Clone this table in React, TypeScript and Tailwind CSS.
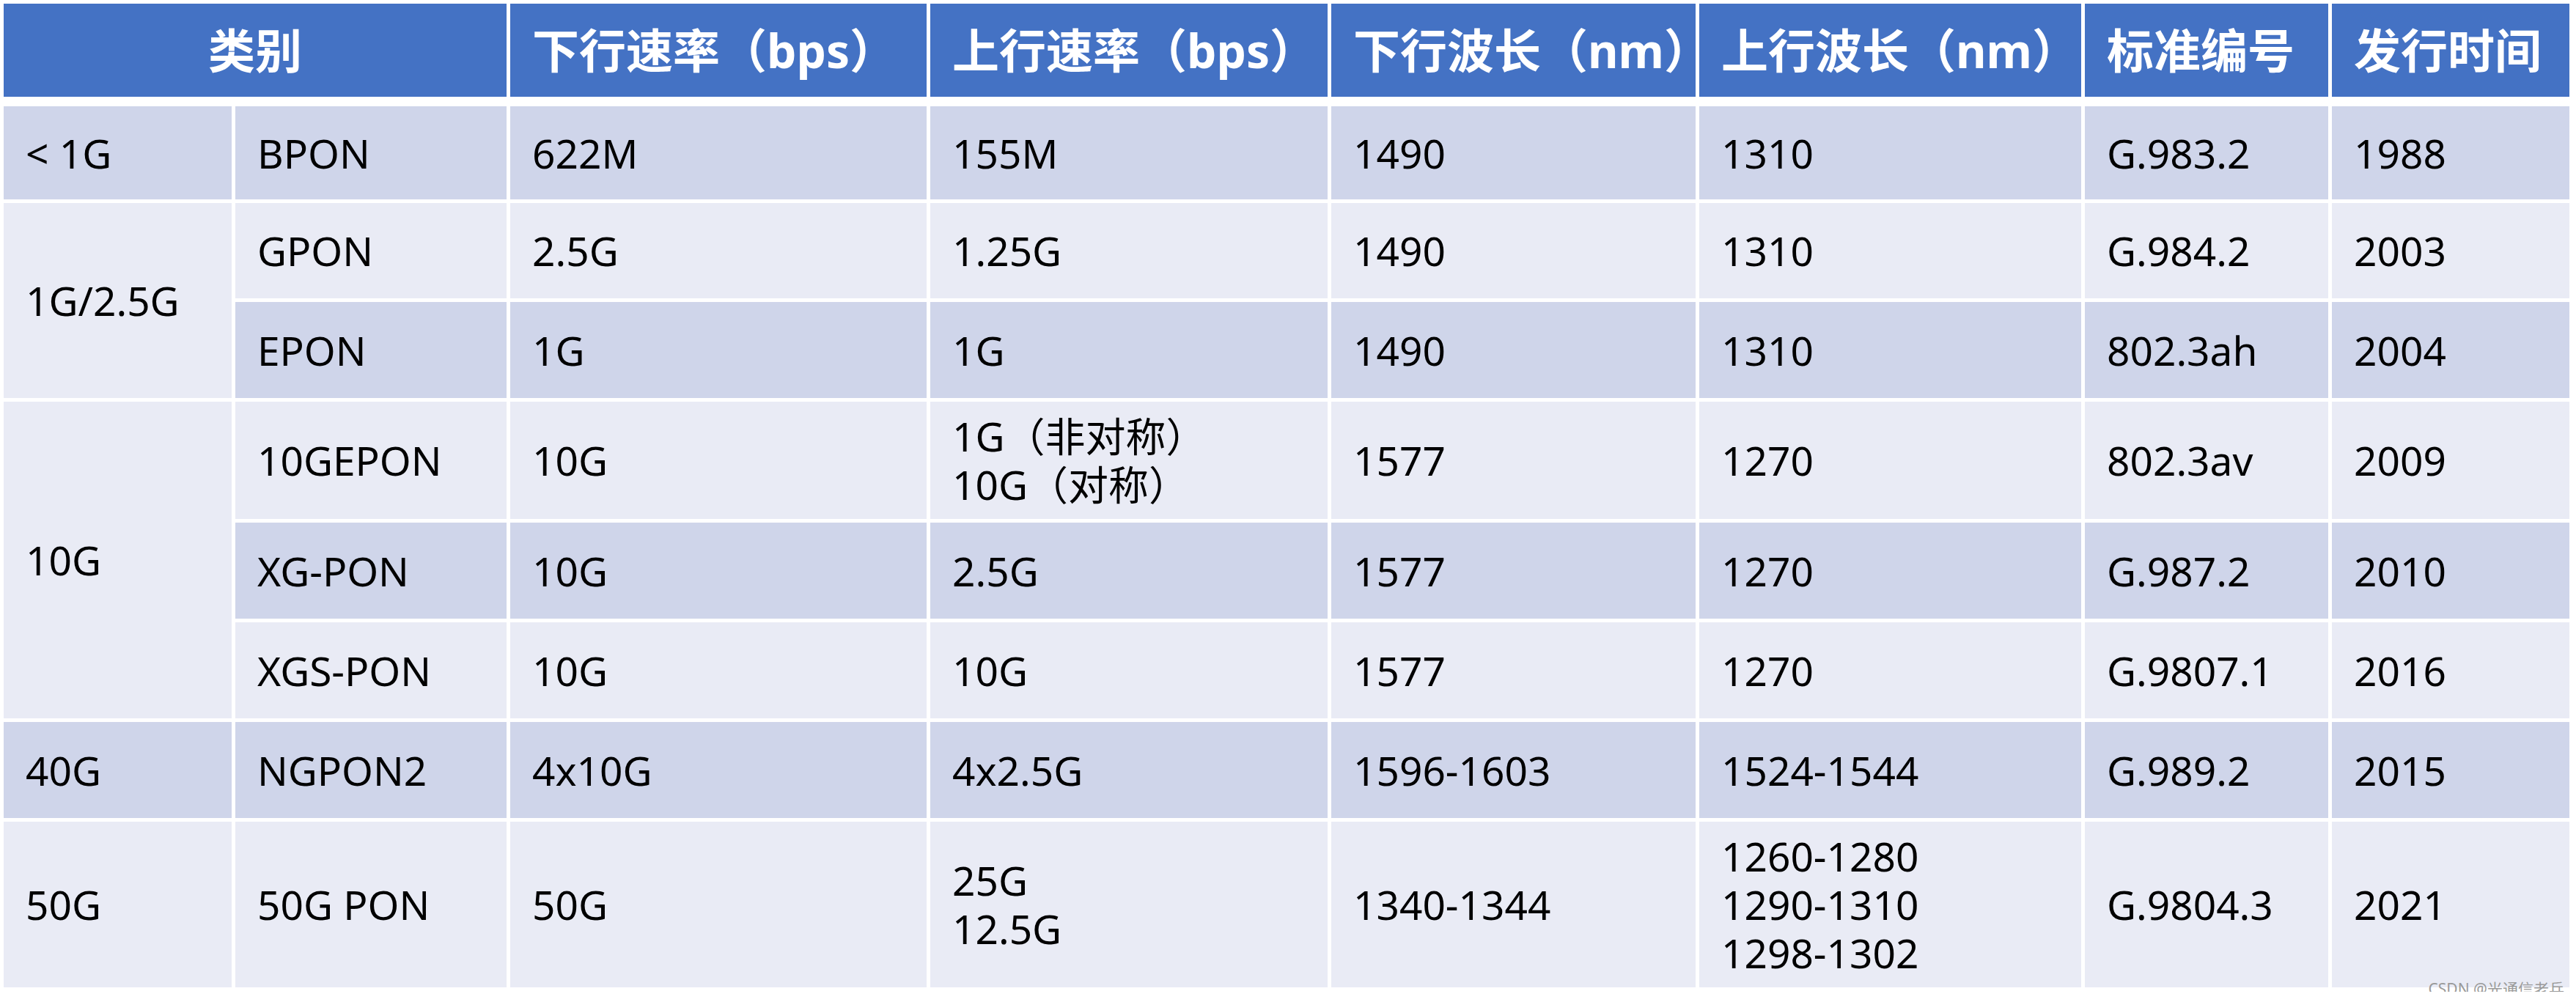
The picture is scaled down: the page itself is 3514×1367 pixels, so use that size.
import React from "react";

const cols = "grid grid-cols-[311px_370px_568px_542px_497px_521px_332px_324px] gap-x-[5px]";
const dark = "bg-[#CFD5EA]";
const light = "bg-[#E9EBF5]";

type Row = { bg: string; cells: React.ReactNode[] };

const Cell = ({ bg, children, span }: { bg: string; children: React.ReactNode; span?: string }) => (
  <div className={`${bg} ${span ?? ""} flex items-center pl-[30px] leading-[66px]`}>
    <div>{children}</div>
  </div>
);

const rows: Row[] = [
  { bg: dark, cells: ["BPON", "622M", "155M", "1490", "1310", "G.983.2", "1988"] },
  { bg: light, cells: ["GPON", "2.5G", "1.25G", "1490", "1310", "G.984.2", "2003"] },
  { bg: dark, cells: ["EPON", "1G", "1G", "1490", "1310", "802.3ah", "2004"] },
  {
    bg: light,
    cells: [
      "10GEPON",
      "10G",
      <>
        1G（非对称）
        <br />
        10G（对称）
      </>,
      "1577",
      "1270",
      "802.3av",
      "2009",
    ],
  },
  { bg: dark, cells: ["XG-PON", "10G", "2.5G", "1577", "1270", "G.987.2", "2010"] },
  { bg: light, cells: ["XGS-PON", "10G", "10G", "1577", "1270", "G.9807.1", "2016"] },
  { bg: dark, cells: ["NGPON2", "4x10G", "4x2.5G", "1596-1603", "1524-1544", "G.989.2", "2015"] },
  {
    bg: light,
    cells: [
      "50G PON",
      "50G",
      <>
        25G
        <br />
        12.5G
      </>,
      "1340-1344",
      <>
        1260-1280
        <br />
        1290-1310
        <br />
        1298-1302
      </>,
      "G.9804.3",
      "2021",
    ],
  },
];

const firstCol: Record<number, { text: string; span: string; bg: string }> = {
  0: { text: "< 1G", span: "", bg: dark },
  1: { text: "1G/2.5G", span: "row-span-2", bg: light },
  3: { text: "10G", span: "row-span-3", bg: light },
  6: { text: "40G", span: "", bg: dark },
  7: { text: "50G", span: "", bg: light },
};

const headers = ["下行速率（bps）", "上行速率（bps）", "下行波长（nm）", "上行波长（nm）", "标准编号", "发行时间"];

export default function App() {
  return (
    <div
      className="relative w-[3514px] h-[1367px] bg-white pt-[5px] pl-[5px] text-black overflow-hidden"
      style={{ fontFamily: '"Noto Sans", "Noto Sans CJK SC", sans-serif' }}
    >
      {/* header */}
      <div className={`${cols} h-[127px] mb-[13px]`}>
        <div className="col-span-2 bg-[#4472C4] flex items-center justify-center text-white font-bold text-[64px]">
          类别
        </div>
        {headers.map((h) => (
          <div key={h} className="bg-[#4472C4] flex items-center pl-[30px] text-white font-bold text-[64px] whitespace-nowrap">
            {h}
          </div>
        ))}
      </div>

      {/* body */}
      <div className={`${cols} gap-y-[5px] grid-rows-[127px_130px_131px_160px_131px_131px_131px_226px] text-[55px]`}>
        {rows.map((r, i) => (
          <React.Fragment key={i}>
            {firstCol[i] && (
              <Cell bg={firstCol[i].bg} span={firstCol[i].span}>
                {firstCol[i].text}
              </Cell>
            )}
            {r.cells.map((c, j) => (
              <Cell key={j} bg={r.bg}>
                {c}
              </Cell>
            ))}
          </React.Fragment>
        ))}
      </div>

      {/* watermark */}
      <div className="absolute right-[16px] top-[1337px] h-[16px] overflow-hidden">
        <div className="text-[21px] leading-[24px] text-[#9a9a9a] whitespace-nowrap">CSDN @光通信老兵</div>
      </div>
    </div>
  );
}
